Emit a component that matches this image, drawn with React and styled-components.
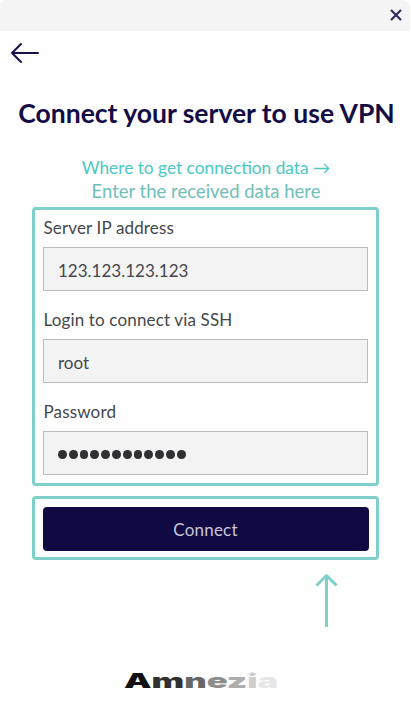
import React from "react";
import styled, { createGlobalStyle } from "styled-components";

const Global = createGlobalStyle`
  * { box-sizing: border-box; }
  body { margin: 0; background: #fff; }
`;

const Screen = styled.main`
  width: 411px;
  height: 723px;
  overflow: hidden;
  display: flex;
  flex-direction: column;
  background: #fefefe;
  font-family: Lato, "Open Sans", sans-serif;
  color: #46474b;
`;

const TitleBar = styled.header`
  height: 31px;
  flex: none;
  margin-right: 1px;
  padding: 0 7px 2px 0;
  display: flex;
  align-items: center;
  justify-content: flex-end;
  background: #f4f4f4;
  border-radius: 6px 8px 0 0;
`;

const IconButton = styled.button`
  display: flex;
  padding: 0;
  border: 0;
  background: none;
`;

const Nav = styled.nav`
  height: 66px;
  flex: none;
  padding: 11px 0 0 10px;
`;

const Title = styled.h1`
  margin: 0;
  height: 32px;
  flex: none;
  padding-left: 2px;
  font-size: 26.5px;
  line-height: 32px;
  font-weight: 700;
  text-align: center;
  white-space: nowrap;
  color: #130c45;
`;

const Links = styled.div`
  flex: none;
  height: 78px;
  padding: 28px 0 0 1px;
  display: flex;
  flex-direction: column;
  align-items: center;
`;

const HelpLink = styled.a`
  font-size: 17.3px;
  line-height: 22px;
  white-space: nowrap;
  color: #4cc8c3;
`;

const Hint = styled.span`
  font-size: 18.5px;
  line-height: 24px;
  white-space: nowrap;
  color: #70beb7;
`;

const Highlight = styled.section`
  flex: none;
  width: 347px;
  height: ${(p) => p.$height};
  margin: 0 0 ${(p) => p.$gap} 32px;
  padding: ${(p) => p.$padding};
  border: 3px solid #7fd0cb;
  border-radius: 4px;
`;

const Field = styled.label`
  display: block;
  height: 92px;
`;

const Label = styled.span`
  display: block;
  height: 37px;
  padding: 7px 0 0 0.5px;
  font-size: 17px;
  line-height: 22px;
  letter-spacing: 0.15px;
`;

const Input = styled.input`
  display: block;
  width: 325px;
  height: 44px;
  padding: 3px 14px 0;
  border: 1px solid #bdbdbd;
  border-radius: 0;
  outline: 0;
  background: #f3f3f3;
  font: 17px/22px Lato, "Open Sans", sans-serif;
  color: #46474b;
`;

const PasswordBox = styled.div`
  width: 325px;
  height: 44px;
  padding: 3px 0 0 14px;
  display: flex;
  align-items: center;
  gap: 2px;
  border: 1px solid #bdbdbd;
  background: #f3f3f3;
`;

const Dot = styled.span`
  width: 8.8px;
  height: 9px;
  border-radius: 50%;
  background: #302f32;
`;

const ConnectButton = styled.button`
  display: block;
  width: 326px;
  height: 44px;
  padding: 2px 1px 0 0;
  border: 0;
  border-radius: 4px;
  background: #110a42;
  color: #c9c5da;
  font: 17px/22px Lato, "Open Sans", sans-serif;
  letter-spacing: 0.2px;
`;

const Pointer = styled.div`
  height: 56px;
  flex: none;
  padding-left: 315px;
`;

const Footer = styled.footer`
  flex: none;
  height: 24px;
  margin: 40px 0 0 123.5px;
`;

const Logo = styled.div`
  width: max-content;
  font: 900 20px/24px Inter, sans-serif;
  transform: scaleX(1.73);
  transform-origin: 0 50%;
`;

const Letter = styled.span`
  color: ${(p) => p.$shade};
`;

const logo = [
  ["A", "#111"], ["m", "#303030"], ["n", "#666"], ["e", "#8d8d8d"],
  ["z", "#aeaeae"], ["i", "#cecece"], ["a", "#e6e6e6"],
];

export default function App() {
  return (
    <Screen>
      <Global />
      <TitleBar>
        <IconButton aria-label="Close">
          <svg width="14" height="14" viewBox="0 0 14 14" fill="none" stroke="#2f2b5c" strokeWidth="2.2">
            <path d="M2 2L12 12M12 2L2 12" />
          </svg>
        </IconButton>
      </TitleBar>
      <Nav>
        <IconButton aria-label="Back">
          <svg width="30" height="22" viewBox="0 0 30 22" fill="none" stroke="#17114a" strokeWidth="2" strokeLinecap="round" strokeLinejoin="round">
            <path d="M28 11H2M11 2L2 11L11 20" />
          </svg>
        </IconButton>
      </Nav>
      <Title>Connect your server to use VPN</Title>
      <Links>
        <HelpLink>Where to get connection data →</HelpLink>
        <Hint>Enter the received data here</Hint>
      </Links>
      <Highlight $height="279px" $gap="10px" $padding="0 8px">
        <Field>
          <Label>Server IP address</Label>
          <Input defaultValue="123.123.123.123" />
        </Field>
        <Field>
          <Label>Login to connect via SSH</Label>
          <Input defaultValue="root" />
        </Field>
        <Field as="div">
          <Label>Password</Label>
          <PasswordBox>
            {Array.from({ length: 12 }, (_, i) => <Dot key={i} />)}
          </PasswordBox>
        </Field>
      </Highlight>
      <Highlight $height="64px" $gap="13px" $padding="8px">
        <ConnectButton>Connect</ConnectButton>
      </Highlight>
      <Pointer>
        <svg width="24" height="56" viewBox="0 0 24 56" fill="none" stroke="#7fd0cb" strokeWidth="3">
          <path d="M11.5 54V2M1.5 12.5L11.5 2.5L21.5 12.5" strokeLinejoin="round" />
        </svg>
      </Pointer>
      <Footer>
        <Logo>
          {logo.map(([char, shade], i) => <Letter key={i} $shade={shade}>{char}</Letter>)}
        </Logo>
      </Footer>
    </Screen>
  );
}
